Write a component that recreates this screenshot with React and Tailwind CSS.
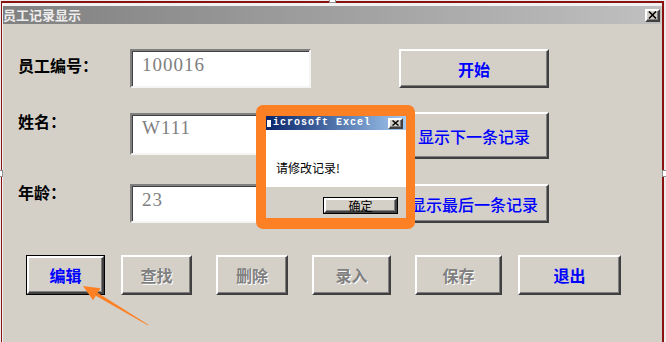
import React from "react";

const raised =
  "border-2 border-t-[#ffffff] border-l-[#ffffff] border-r-[#404040] border-b-[#404040] shadow-[inset_-1px_-1px_0_#808080] bg-[#d4d0c8]";
const sunken =
  "border-2 border-t-[#808080] border-l-[#808080] border-r-[#f4f4f4] border-b-[#f4f4f4] shadow-[inset_1px_1px_0_#404040] bg-white";

function Label({ children, pt }) {
  return (
    <div className={`w-[112px] shrink-0 text-[16px] leading-[16px] font-bold text-black ${pt}`}>
      {children}
    </div>
  );
}

function Field({ value, h, pt }) {
  return (
    <div className={`w-[181px] ${h} ${sunken} pl-[10px] ${pt}`}>
      <span className="font-['Liberation_Serif',serif] text-[19px] leading-[20px] tracking-[1px] text-[#808080]">
        {value}
      </span>
    </div>
  );
}

function RightBtn({ children, h, bold }) {
  return (
    <div
      className={`ml-[88px] w-[150px] ${h} ${raised} flex items-center justify-center text-[16px] leading-[16px] text-[#0000ff] ${bold ? "font-bold" : "font-medium"}`}
    >
      {children}
    </div>
  );
}

function BottomBtn({ children, w, ml, disabled }) {
  return (
    <div
      className={`${w} ${ml} h-[40px] ${raised} flex items-center justify-center text-[16px] leading-[16px] font-bold ${
        disabled ? "text-[#808080] [text-shadow:1px_1px_0_#ffffff]" : "text-[#0000ff]"
      }`}
    >
      {children}
    </div>
  );
}

export default function App() {
  return (
    <div className="relative w-[666px] h-[342px] overflow-hidden bg-[#ececec] font-['Noto_Sans_CJK_SC',sans-serif]">
      {/* window */}
      <div className="ml-[2px] mt-[3px] w-[660px] h-[339px] bg-[#d4d0c8] border-t-[3px] border-l border-[#f2f2f2] flex flex-col">
        {/* title bar */}
        <div className="h-[18px] w-[658px] bg-gradient-to-r from-[#808080] to-[#c0c0c0] flex items-center justify-between pr-[1px]">
          <span className="text-[13px] leading-[18px] font-bold text-[#eeeeee]">员工记录显示</span>
          <div className={`w-[15px] h-[13px] ${raised} flex items-center justify-center`}>
            <svg width="9" height="8" viewBox="0 0 9 8">
              <path d="M1 0.5 L8 7.5 M8 0.5 L1 7.5" stroke="#000" strokeWidth="1.6" />
            </svg>
          </div>
        </div>

        {/* body */}
        <div className="flex flex-col pl-[15px]">
          <div className="mt-[25px] h-[39px] flex items-start">
            <Label pt="pt-[8px]">员工编号：</Label>
            <Field value="100016" h="h-[39px]" pt="pt-[1px]" />
            <RightBtn h="h-[39px]" bold>开始</RightBtn>
          </div>
          <div className="mt-[24px] h-[47px] flex items-start">
            <Label pt="pt-[1px]">姓名：</Label>
            <div className="mt-[1px]">
              <Field value="W111" h="h-[42px]" pt="pt-[0px]" />
            </div>
            <RightBtn h="h-[47px]">显示下一条记录</RightBtn>
          </div>
          <div className="mt-[25px] h-[39px] flex items-start">
            <Label pt="pt-[0px]">年龄：</Label>
            <Field value="23" h="h-[39px]" pt="pt-[1px]" />
            <RightBtn h="h-[39px]">显示最后一条记录</RightBtn>
          </div>

          <div className="mt-[32px] h-[40px] flex items-start pl-[8px]">
            <div className="w-[79px] h-[40px] border border-black">
              <div className={`w-full h-full ${raised} flex items-center justify-center text-[16px] leading-[16px] font-bold text-[#0000ff]`}>
                编辑
              </div>
            </div>
            <BottomBtn w="w-[71px]" ml="ml-[16px]" disabled>查找</BottomBtn>
            <BottomBtn w="w-[72px]" ml="ml-[24px]" disabled>删除</BottomBtn>
            <BottomBtn w="w-[79px]" ml="ml-[24px]" disabled>录入</BottomBtn>
            <BottomBtn w="w-[87px]" ml="ml-[24px]" disabled>保存</BottomBtn>
            <BottomBtn w="w-[103px]" ml="ml-[16px]">退出</BottomBtn>
          </div>
        </div>
      </div>

      {/* selection frame */}
      <div className="pointer-events-none absolute left-[1px] top-[1px] w-[663px] h-[350px] border-t-2 border-r-2 border-l border-[#8b1010]" />
      <div className="absolute left-[-4px] top-[170px] w-[7px] h-[7px] bg-white border border-[#909090]" />
      <div className="absolute left-[662px] top-[170px] w-[7px] h-[7px] bg-white border border-[#909090]" />
      <div className="absolute left-[329px] top-[-4px] w-[7px] h-[7px] bg-white border border-[#909090]" />

      {/* message box */}
      <div className="absolute left-[256px] top-[105px] w-[159px] h-[124px] rounded-[7px] bg-[#fd8024] pl-[10px] pt-[11px]">
        <div className="w-[140px] h-[102px] flex flex-col bg-[#d4d0c8]">
          <div className="h-[14px] bg-gradient-to-r from-[#0a246a] to-[#a6caf0] flex items-center justify-between">
            <div className="flex items-center">
              <div className="ml-[1px] w-[4px] h-[7px] bg-white" />
              <span className="ml-[2px] font-['Liberation_Mono',monospace] text-[10px] leading-[14px] font-bold tracking-[1px] text-white">
                icrosoft Excel
              </span>
            </div>
            <div className={`mr-[3px] w-[15px] h-[11px] ${raised} flex items-center justify-center`}>
              <svg width="7" height="6" viewBox="0 0 7 6">
                <path d="M0.5 0.5 L6.5 5.5 M6.5 0.5 L0.5 5.5" stroke="#000" strokeWidth="1.4" />
              </svg>
            </div>
          </div>
          <div className="h-[57px] bg-white pl-[10px] pt-[24px]">
            <span className="text-[12px] leading-[12px] text-black">请修改记录!</span>
          </div>
          <div className="flex-1 flex justify-end pr-[8px] pt-[10px]">
            <div className="w-[75px] h-[17px] border border-black">
              <div className={`w-full h-full ${raised} flex items-center justify-center text-[12px] leading-[12px] text-black`}>
                确定
              </div>
            </div>
          </div>
        </div>
      </div>

      {/* arrow */}
      <svg className="pointer-events-none absolute left-0 top-0" width="666" height="342" viewBox="0 0 666 342">
        <polygon points="83,286 100.5,288.2 93,300.2" fill="#fd8024" />
        <polygon points="95.8,295.8 97.6,292.8 148.3,324.7 147.7,325.3" fill="#fd8024" />
      </svg>
    </div>
  );
}
